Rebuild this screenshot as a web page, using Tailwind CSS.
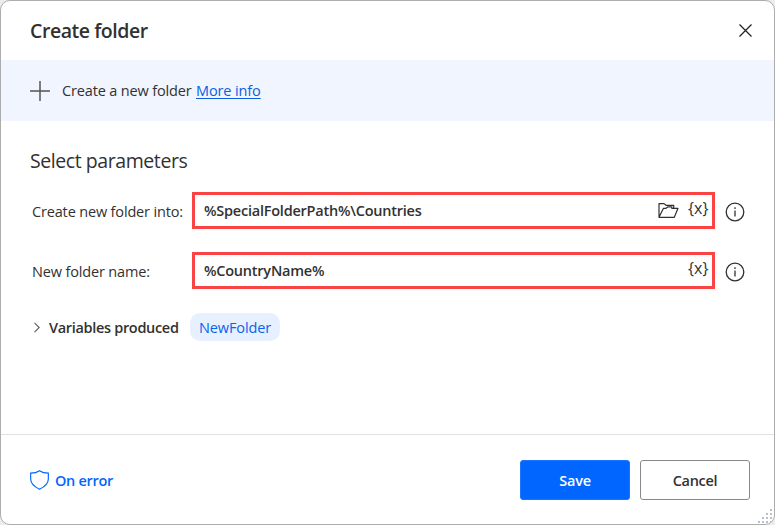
<!DOCTYPE html>
<html lang="en">
<head>
<meta charset="utf-8">
<title>Create folder</title>
<script src="https://cdn.jsdelivr.net/npm/@tailwindcss/browser@4"></script>
</head>
<body class="h-[525px] w-[775px] overflow-hidden bg-[#ececec] font-['Open_Sans','Noto_Sans',sans-serif] text-[14.5px] tracking-[-0.16px] text-[#323130]">
<div class="relative flex h-[525px] w-[775px] flex-col overflow-hidden rounded-[10px] border border-[#adadad] bg-white whitespace-nowrap">
  <header class="flex h-[59px] shrink-0 items-center justify-between pr-[22px] pl-[29px]">
    <h1 class="text-[19.5px] leading-6 font-semibold tracking-[-0.45px]">Create folder</h1>
    <svg class="size-[14px]" viewBox="0 0 14 14" fill="none" stroke="#252423" stroke-width="1.3"><path d="M1.500 .5l12 12M13.500 .5L1.500 12.500"/></svg>
  </header>
  <section class="flex h-[61px] shrink-0 items-center bg-[#f0f5ff] pl-[29px]">
    <svg class="size-5" viewBox="0 0 20 20" fill="none" stroke="#555453" stroke-width="1.5"><path d="M10 0v20M0 10h20"/></svg>
    <p class="ml-3 flex"><span class="w-[134px] tracking-[-0.15px]">Create a new folder</span><a class="tracking-[-0.12px] text-[#0a5fe0] underline underline-offset-2">More info</a></p>
  </section>
  <main class="flex grow flex-col pl-[29px]">
    <h2 class="mt-[28px] text-[19.5px] leading-6 tracking-[-0.43px]">Select parameters</h2>
    <div class="mt-[18px] flex h-[38px] items-center">
      <span class="w-[162px] pt-[3px] pl-[2px]">Create new folder into:</span>
      <div class="flex h-[37px] w-[523px] items-center border-3 border-[#fa4343] pl-[9px]">
        <span class="pt-[2px] font-semibold tracking-[-0.23px]">%SpecialFolderPath%\Countries</span>
        <svg class="ml-auto h-[17px] w-[21px]" viewBox="0 0 21 17" fill="none" stroke="#323130" stroke-width="1.2" stroke-linejoin="round"><path d="M1 15.300V1.600h5l2 1.700h7.700v3M1 15.300L5.500 6.300H8l2-1.500h3.800v1.500H20l-3.700 9z"/></svg>
        <span class="ml-[9px] w-[24px] pb-[4px] text-[16px] tracking-[0.1px]">{x}</span>
      </div>
      <svg class="mt-[4px] ml-[10px] size-5" viewBox="0 0 20 20" fill="none" stroke="#323130" stroke-width="1.300"><circle cx="10" cy="10" r="8.800"/><path d="M10 8.500v6M10 5.300v1.600"/></svg>
    </div>
    <div class="mt-[22px] flex h-[38px] items-center">
      <span class="w-[162px] pt-[3px] pl-[2px]">New folder name:</span>
      <div class="flex h-[37px] w-[523px] items-center border-3 border-[#fa4343] pl-[9px]">
        <span class="pt-[2px] font-semibold tracking-[-0.23px]">%CountryName%</span>
        <span class="ml-auto w-[24px] pb-[4px] text-[16px] tracking-[0.1px]">{x}</span>
      </div>
      <svg class="mt-[4px] ml-[10px] size-5" viewBox="0 0 20 20" fill="none" stroke="#323130" stroke-width="1.300"><circle cx="10" cy="10" r="8.800"/><path d="M10 8.500v6M10 5.300v1.600"/></svg>
    </div>
    <div class="mt-[23px] flex h-[30px] items-center">
      <svg class="ml-[4px] h-[11px] w-[6px]" viewBox="0 0 6 11" fill="none" stroke="#605e5c" stroke-width="1.1"><path d="M.5.8l4.700 4.700L.5 10.200"/></svg>
      <span class="ml-[9px] w-[141px] pt-px font-semibold tracking-[-0.32px]">Variables produced</span>
      <span class="flex h-7 w-[90px] items-center justify-center rounded-[10px] bg-[#e6f0ff] pt-[2px] tracking-[-0.1px] text-[#0a62ee]">NewFolder</span>
    </div>
  </main>
  <footer class="flex h-[90px] shrink-0 items-center border-t border-[#e1e1e1] pr-[24px] pl-[29px]">
    <svg class="h-[20px] w-[19px]" viewBox="0 0 20 20" preserveAspectRatio="none" fill="none" stroke="#0066ff" stroke-width="1.200"><path d="M10 .8C7.500 2.500 4 3.200.7 3.200V9c0 4.500 3.500 7.500 9.300 10.300C15.800 16.500 19.300 13.500 19.300 9V3.200C16 3.200 12.500 2.500 10 .8z"/></svg>
    <span class="ml-[6px] pt-[2px] font-semibold tracking-[-0.3px] text-[#0066ff]">On error</span>
    <button class="ml-auto h-10 w-[110px] rounded-[3px] border border-[#1a76ff] bg-[#0066ff] pt-[2px] font-semibold tracking-[-0.2px] text-white">Save</button>
    <button class="ml-[10px] h-10 w-[110px] rounded-[3px] border border-[#8a8886] bg-white pt-[2px] font-semibold tracking-[-0.3px]">Cancel</button>
  </footer>
  <svg class="absolute right-[1px] bottom-0 size-[15px]" viewBox="0 0 15 15" fill="#b9bfd2"><path d="M12 0h2v2h-2zM12 4h2v2h-2zM8 4h2v2H8zM12 8h2v2h-2zM8 8h2v2H8zM4 8h2v2H4zM12 12h2v2h-2zM8 12h2v2H8zM4 12h2v2H4zM0 12h2v2H0z"/></svg>
</div>
</body>
</html>
